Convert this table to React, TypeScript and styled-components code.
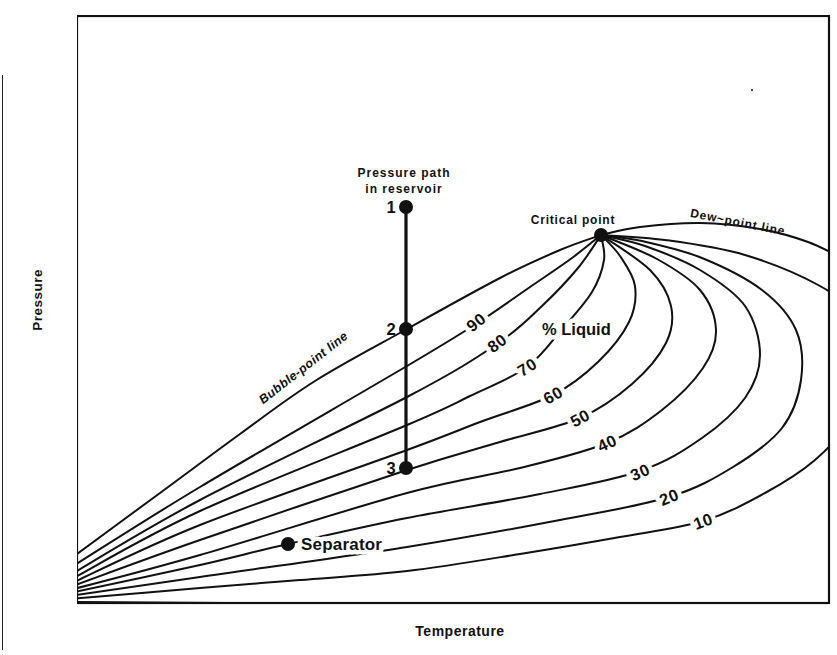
import styled, { createGlobalStyle } from "styled-components";

const GlobalStyle = createGlobalStyle`
    html, body {
        margin: 0;
        padding: 0;
        background: #fff;
    }
    body {
        font-family: "Liberation Sans", Arial, sans-serif;
        color: #111;
    }
`

const Page = styled.div`
    width: 837px;
    height: 655px;
    padding-top: 15px;
    box-sizing: border-box;
    display: grid;
    grid-template-columns: 77px 754px;
    grid-template-rows: 590px auto;
    overflow: hidden;
`

const LeftAxis = styled.div`
    grid-row: 1 / 3;
    grid-column: 1;
    margin-top: 60px;
    margin-left: 2px;
    height: 575px;
    border-left: 1.5px solid #222;
    display: flex;
    flex-direction: column;
    align-items: flex-start;
    padding-top: 194px;
    padding-left: 27px;
    box-sizing: border-box;
`

const AxisTitle = styled.div<{ $vertical?: boolean }>`
    font-size: 14px;
    font-weight: 700;
    letter-spacing: 0.5px;
    color: #111;
    ${({ $vertical }) => $vertical && `
        font-size: 13.5px;
        writing-mode: vertical-rl;
        transform: rotate(180deg);
    `}
`

const Chart = styled.svg`
    grid-row: 1;
    grid-column: 2;
    display: block;
`

const BottomAxis = styled.div`
    grid-row: 2;
    grid-column: 2;
    display: flex;
    justify-content: center;
    padding-left: 12px;
    padding-top: 18px;
`

const Frame = styled.rect`
    fill: none;
    stroke: #111;
    stroke-width: 2.2;
`

const Curve = styled.path`
    fill: none;
    stroke: #111;
    stroke-width: 2;
    stroke-linecap: round;
`

const PathLine = styled.line`
    stroke: #111;
    stroke-width: 3.2;
`

const Dot = styled.circle`
    fill: #111;
`

const Label = styled.text<{ $size?: number; $spacing?: number }>`
    font-family: "Liberation Sans", Arial, sans-serif;
    font-weight: 700;
    font-size: ${({ $size }) => $size ?? 14}px;
    letter-spacing: ${({ $spacing }) => $spacing ?? 0}px;
    fill: #111;
`

const GapLabel = styled(Label)`
    stroke: #fff;
    stroke-width: 9px;
    stroke-linejoin: round;
    paint-order: stroke;
`

type Pt = [number, number]

// catmull-rom through the points
const spline = (pts: Pt[]) => {
    let d = `M${pts[0][0]},${pts[0][1]}`
    for (let i = 0; i < pts.length - 1; i++) {
        const p0 = pts[i - 1] || pts[i]
        const p1 = pts[i]
        const p2 = pts[i + 1]
        const p3 = pts[i + 2] || p2
        const c1x = p1[0] + (p2[0] - p0[0]) / 6
        const c1y = p1[1] + (p2[1] - p0[1]) / 6
        const c2x = p2[0] - (p3[0] - p1[0]) / 6
        const c2y = p2[1] - (p3[1] - p1[1]) / 6
        d += ` C${c1x.toFixed(1)},${c1y.toFixed(1)} ${c2x.toFixed(1)},${c2y.toFixed(1)} ${p2[0]},${p2[1]}`
    }
    return d
}

const CP: Pt = [601, 235]

const curves: Pt[][] = [
    // bubble-point line
    [[70, 559], [160, 493], [240, 434], [315, 381], [407, 329], [500, 278], [560, 250], CP],
    // 90
    [[70, 568], [200, 487], [407, 366], [476, 324], [530, 287], [572, 258], CP],
    // 80
    [[70, 575], [200, 500], [407, 397], [497, 344], [543, 305], [578, 268], CP],
    // 70
    [[70, 580], [200, 511], [407, 425], [470, 396], [527, 367], [563, 328], [592, 292], [604, 260], CP],
    // 60
    [[70, 584], [200, 525], [407, 450], [480, 422], [553, 395], [598, 362], [629, 322], [635, 286], [620, 256], CP],
    // 50
    [[70, 587], [200, 540], [407, 470], [500, 442], [580, 418], [632, 384], [666, 343], [671, 306], [650, 270], CP],
    // 40
    [[70, 590], [200, 555], [407, 493], [520, 468], [607, 443], [662, 410], [703, 368], [716, 330], [700, 290], [657, 259], CP],
    // 30
    [[70, 593], [200, 565], [288, 544], [407, 518], [540, 494], [640, 471], [702, 438], [745, 398], [760, 355], [745, 306], [700, 270], [645, 246], CP],
    // 20
    [[70, 596], [200, 577], [407, 547], [560, 520], [669, 497], [733, 467], [782, 428], [801, 380], [796, 330], [762, 290], [702, 258], [642, 241], CP],
    // 10
    [[70, 599], [200, 588], [300, 580], [407, 571], [520, 554], [620, 537], [703, 521], [765, 493], [815, 460], [850, 420], [868, 370], [860, 320], [820, 286], [745, 255], [665, 240], CP],
    // dew-point line
    [CP, [640, 227], [700, 223], [760, 229], [808, 242], [850, 262]],
    [[70, 602], [250, 603], [500, 604]],
]

const pctLabels: { text: string; x: number; y: number; a: number }[] = [
    { text: "90", x: 476, y: 322, a: -38 },
    { text: "80", x: 497, y: 343, a: -36 },
    { text: "70", x: 527, y: 367, a: -32 },
    { text: "60", x: 553, y: 395, a: -30 },
    { text: "50", x: 580, y: 418, a: -28 },
    { text: "40", x: 607, y: 443, a: -25 },
    { text: "30", x: 640, y: 472, a: -24 },
    { text: "20", x: 669, y: 497, a: -22 },
    { text: "10", x: 703, y: 521, a: -20 },
]

const pathPoints: { n: string; y: number }[] = [
    { n: "1", y: 207 },
    { n: "2", y: 329 },
    { n: "3", y: 468 },
]

export default function App() {
    return (
        <>
            <GlobalStyle />
            <Page>
                <LeftAxis>
                    <AxisTitle $vertical>Pressure</AxisTitle>
                </LeftAxis>

                <Chart width={754} height={590} viewBox="77 15 754 590">
                    <defs>
                        <clipPath id="plot">
                            <rect x={78} y={17} width={751} height={585} />
                        </clipPath>
                    </defs>

                    <g clipPath="url(#plot)">
                        {curves.map((pts, i) => (
                            <Curve key={i} d={spline(pts)} />
                        ))}
                    </g>

                    <Frame x={77} y={16} width={752} height={587} />

                    {pctLabels.map(l => (
                        <GapLabel
                            key={l.text}
                            x={l.x}
                            y={l.y}
                            $size={16.5}
                            $spacing={0.5}
                            textAnchor="middle"
                            dominantBaseline="central"
                            transform={`rotate(${l.a} ${l.x} ${l.y})`}
                        >
                            {l.text}
                        </GapLabel>
                    ))}

                    <GapLabel x={542} y={335} $size={16.5}>% Liquid</GapLabel>

                    <GapLabel
                        x={306}
                        y={371}
                        $size={12.5}
                        $spacing={0.4}
                        textAnchor="middle"
                        transform="rotate(-38 306 371)"
                        fontStyle="italic"
                    >
                        Bubble-point line
                    </GapLabel>

                    <Label x={573} y={224} $size={12} $spacing={0.8} textAnchor="middle">Critical point</Label>
                    <Label x={737} y={226} $size={12} $spacing={0.8} textAnchor="middle" transform="rotate(11 737 226)">
                        Dew~point line
                    </Label>

                    <Label x={404} y={177} $size={12} $spacing={1} textAnchor="middle">Pressure path</Label>
                    <Label x={404} y={193} $size={12} $spacing={1} textAnchor="middle">in reservoir</Label>

                    <PathLine x1={406} y1={207} x2={406} y2={468} />
                    {pathPoints.map(p => (
                        <g key={p.n}>
                            <Dot cx={406} cy={p.y} r={7} />
                            <Label x={391} y={p.y} $size={16.5} textAnchor="middle" dominantBaseline="central">{p.n}</Label>
                        </g>
                    ))}

                    <Dot cx={CP[0]} cy={CP[1]} r={7} />

                    <Dot cx={288} cy={544} r={7} />
                    <GapLabel x={301} y={550} $size={17} $spacing={0.2}>Separator</GapLabel>

                    <Dot cx={752} cy={90} r={1} />
                </Chart>

                <BottomAxis>
                    <AxisTitle>Temperature</AxisTitle>
                </BottomAxis>
            </Page>
        </>
    )
}
